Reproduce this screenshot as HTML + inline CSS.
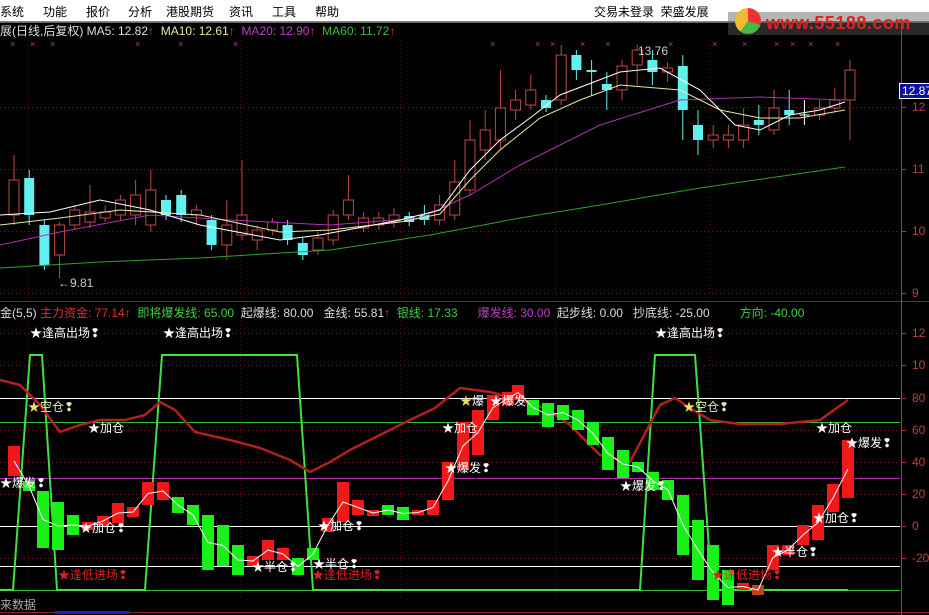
<!DOCTYPE html>
<html><head><meta charset="utf-8"><style>
body{margin:0;width:929px;height:615px;overflow:hidden;background:#000;font-family:"Liberation Sans","Noto Sans CJK SC",sans-serif;}
#menu{position:absolute;left:0;top:0;width:929px;height:21px;background:#fff;font-size:12px;color:#000;border-bottom:1px solid #888}
#menu span{position:absolute;top:3px}
.t{position:absolute;font-size:12px;white-space:nowrap;line-height:14px}
svg{position:absolute;left:0;top:0}
</style></head><body>
<div id="menu">
<span style="left:0">系统</span><span style="left:43px">功能</span><span style="left:86px">报价</span><span style="left:128px">分析</span><span style="left:166px">港股期货</span><span style="left:229px">资讯</span><span style="left:272px">工具</span><span style="left:315px">帮助</span>
<span style="left:594px">交易未登录 &nbsp;荣盛发展</span>
</div>
<svg id="s" width="929" height="615" xmlns="http://www.w3.org/2000/svg"></svg>
<div class="t" style="left:728px;top:12px;width:201px;height:23px;background:rgba(90,90,90,0.45)"></div>
<div class="t" style="left:735px;top:8px;width:26px;height:26px;border-radius:50%;background:conic-gradient(#e33 0 30%,#4b4 30% 60%,#eb3 60% 100%)"></div>
<div class="t" style="left:766px;top:12px;font-size:18px;font-weight:bold;color:#e02020;line-height:22px;letter-spacing:0.5px">www.55188.com</div>
<div class="t" style="left:0;top:24px;color:#ddd">展(日线,后复权) MA5: 12.82<span style="color:#f33">↑</span> &nbsp;<span style="color:#e8e8a0">MA10: 12.61</span><span style="color:#f33">↑</span> &nbsp;<span style="color:#c040c0">MA20: 12.90</span><span style="color:#f33">↑</span> &nbsp;<span style="color:#40c040">MA60: 11.72</span><span style="color:#f33">↑</span></div>
<div class="t" style="left:0;top:306px;color:#ddd">金(5,5) <span style="color:#e03030">主力资金: 77.14</span><span style="color:#f33">↑</span> &nbsp;<span style="color:#40d040">即将爆发线: 65.00</span> &nbsp;起爆线: 80.00 &nbsp; 金线: 55.81<span style="color:#f33">↑</span> &nbsp;<span style="color:#40d040">银线: 17.33</span> &nbsp; &nbsp; &nbsp;<span style="color:#c040c0">爆发线: 30.00</span> &nbsp;起步线: 0.00 &nbsp; 抄底线: -25.00 &nbsp; &nbsp; &nbsp; &nbsp; <span style="color:#40d040">方向: -40.00</span></div>
<div class="t" style="left:0;top:598px;color:#aaa">来数据</div>
<div class="t" style="left:899px;top:83px;background:#1010a0;color:#fff;padding:0 2px;border:1px solid #fff;">12.87</div>
<div class="t" style="left:912px;top:100px;color:#c04040">12</div>
<div class="t" style="left:912px;top:162px;color:#c04040">11</div>
<div class="t" style="left:912px;top:224px;color:#c04040">10</div>
<div class="t" style="left:912px;top:286px;color:#c04040">9</div>
<div class="t" style="left:912px;top:326px;color:#c04040">12</div>
<div class="t" style="left:912px;top:358px;color:#c04040">10</div>
<div class="t" style="left:912px;top:391px;color:#c04040">80</div>
<div class="t" style="left:912px;top:423px;color:#c04040">60</div>
<div class="t" style="left:912px;top:455px;color:#c04040">40</div>
<div class="t" style="left:912px;top:487px;color:#c04040">20</div>
<div class="t" style="left:912px;top:519px;color:#c04040">0</div>
<div class="t" style="left:912px;top:551px;color:#c04040">-20</div>
<div class="t" style="left:58px;top:276px;color:#ccc">←9.81</div>
<div class="t" style="left:638px;top:44px;color:#ccc">13.76</div>
<div class="t" style="left:30px;top:326px;color:#fff">★逢高出场❢</div>
<div class="t" style="left:163px;top:326px;color:#fff">★逢高出场❢</div>
<div class="t" style="left:655px;top:326px;color:#fff">★逢高出场❢</div>
<div class="t" style="left:28px;top:400px;color:#f0e060">★<span style="color:#e8e8b0">空仓❢</span></div>
<div class="t" style="left:683px;top:400px;color:#f0e060">★<span style="color:#e8e8b0">空仓❢</span></div>
<div class="t" style="left:88px;top:421px;color:#fff">★加仓</div>
<div class="t" style="left:442px;top:421px;color:#fff">★加仓</div>
<div class="t" style="left:816px;top:421px;color:#fff">★加仓</div>
<div class="t" style="left:460px;top:394px;color:#fff"><span style="color:#f0e060">★</span>爆</div>
<div class="t" style="left:490px;top:394px;color:#fff">★爆发</div>
<div class="t" style="left:0;top:476px;color:#fff">★爆发❢</div>
<div class="t" style="left:445px;top:461px;color:#fff">★爆发❢</div>
<div class="t" style="left:620px;top:479px;color:#fff">★爆发❢</div>
<div class="t" style="left:846px;top:436px;color:#fff">★爆发❢</div>
<div class="t" style="left:80px;top:521px;color:#fff">★加仓❢</div>
<div class="t" style="left:318px;top:519px;color:#fff">★加仓❢</div>
<div class="t" style="left:813px;top:511px;color:#fff">★加仓❢</div>
<div class="t" style="left:252px;top:560px;color:#fff">★半仓❢</div>
<div class="t" style="left:313px;top:557px;color:#fff">★半仓❢</div>
<div class="t" style="left:772px;top:545px;color:#fff">★半仓❢</div>
<div class="t" style="left:58px;top:568px;color:#e02020">★逢低进场❢</div>
<div class="t" style="left:312px;top:568px;color:#e02020">★逢低进场❢</div>
<div class="t" style="left:712px;top:568px;color:#e02020">★逢低进场❢</div>
<script>
var s=document.getElementById('s'),h='';
function L(x1,y1,x2,y2,c,w,d){h+='<line x1="'+x1+'" y1="'+y1+'" x2="'+x2+'" y2="'+y2+'" stroke="'+c+'" stroke-width="'+(w||1)+'"'+(d?' stroke-dasharray="'+d+'"':'')+'/>';}
function P(pts,c,w){h+='<polyline fill="none" stroke="'+c+'" stroke-width="'+(w||1)+'" points="'+pts+'"/>';}
function R(x,y,w,hh,f,st){h+='<rect x="'+x+'" y="'+y+'" width="'+w+'" height="'+Math.max(hh,1)+'" fill="'+f+'"'+(st?' stroke="'+st+'"':'')+'/>';}
L(0,22.5,929,22.5,'#666');
[107,169,231,293].forEach(function(y){L(0,y+.5,900,y+.5,'#701818',1,'1 3');});
[333,365,430,462,494,558].forEach(function(y){L(0,y+.5,900,y+.5,'#701818',1,'1 3');});
[28,240,400,555,710].forEach(function(x){L(x+.5,40,x+.5,300,'#501010',1,'1 3');L(x+.5,320,x+.5,598,'#501010',1,'1 3');});
L(901.5,22,901.5,615,'#c03030');L(0,301.5,929,301.5,'#902020');L(0,612.5,929,612.5,'#902020');
R(55,611,75,3,'#2020c0');
[107,169,231,293,333,365,398,430,462,494,526,558].forEach(function(y){L(901,y+.5,906,y+.5,'#c03030');});
[10,30,50,135,178,233,490,535,550,580,605,668,712,742,774,790,808,835].forEach(function(x){h+='<text x="'+x+'" y="47" fill="#c030c0" font-size="9" font-family="Liberation Sans">×</text>';});
var C=[[215,180,155,225,1],[178,215,170,225,0],[225,265,220,270,0],[255,225,222,278,1],[225,210,205,230,1],[222,212,185,228,1],[218,212,205,222,1],[215,200,195,220,1],[215,195,180,225,1],[225,190,170,232,1],[200,215,195,220,0],[195,215,190,222,0],[215,210,205,225,1],[220,245,215,250,0],[245,225,200,260,1],[235,215,160,240,1],[240,230,225,250,1],[230,222,218,235,1],[225,240,220,245,0],[243,255,238,260,0],[250,238,232,255,1],[240,215,210,245,1],[215,200,175,220,1],[228,218,212,232,1],[225,218,212,230,1],[222,215,208,228,1],[216,222,212,226,0],[215,220,205,225,0],[220,205,195,225,1],[215,182,160,220,1],[190,140,120,195,1],[150,130,110,160,1],[140,108,70,150,1],[110,100,90,120,1],[105,90,75,110,1],[100,108,95,112,0],[100,55,45,105,1],[55,70,50,80,0],[70,72,60,95,0],[84,90,72,110,0],[90,66,60,100,1],[65,50,45,85,1],[60,72,50,85,0],[72,68,62,82,1],[66,110,55,140,0],[125,140,110,155,0],[140,135,125,148,1],[140,135,125,148,1],[140,125,108,148,1],[120,125,105,135,0],[130,108,90,135,1],[110,115,90,125,0],[115,115,100,125,2],[115,108,100,120,1],[108,100,88,112,1],[100,70,60,140,1]];
C.forEach(function(c,k){var x=14+15.2*k,o=c[0],cl=c[1],t=Math.min(o,cl),b=Math.max(o,cl);
 if(c[4]==1){L(x,c[2],x,t,'#c04848');L(x,b,x,c[3],'#c04848');h+='<rect x="'+(x-5)+'" y="'+t+'" width="10" height="'+Math.max(b-t,1)+'" fill="none" stroke="#c04848"/>';}
 else if(c[4]==0){L(x,c[2],x,c[3],'#60f0f0');R(x-5,t,10,b-t,'#60f0f0');}
 else{L(x,c[2],x,c[3],'#fff');L(x-5,t,x+5,t,'#fff');}
});
P('0,268 100,262 200,258 330,250 430,235 520,218 600,205 700,188 790,175 845,167','#30a030');
P('0,245 60,232 150,215 230,220 330,225 420,218 470,195 520,165 600,125 680,100 760,97 845,100','#b030b0');
P('0,225 60,218 120,210 200,215 280,232 330,230 400,222 440,214 470,180 500,150 540,118 580,100 620,85 680,90 720,110 760,118 800,118 845,110','#e8e8a0');
P('0,215 50,212 100,200 150,210 200,225 280,240 320,235 400,220 440,210 470,170 500,140 530,118 560,95 620,72 660,68 700,90 735,125 760,130 790,115 820,110 845,102','#fff');
L(0,398.5,900,398.5,'#fff');L(0,422.5,900,422.5,'#30c030');L(0,478.5,900,478.5,'#b030b0');L(0,526.5,900,526.5,'#fff');L(0,566.5,900,566.5,'#fff');L(0,590.5,900,590.5,'#30c030');
P('0,590 13,590 30,355 42,355 57,590 145,590 162,355 297,355 313,590 640,590 655,355 695,355 712,590 848,590','#40e040',2);
P('0,380 20,385 40,405 60,432 80,425 100,420 125,420 145,415 160,402 175,410 195,432 230,440 260,448 290,460 310,472 330,462 350,450 380,435 410,420 435,408 460,388 490,392 520,400 545,408 570,425 600,455 630,462 660,405 675,398 690,408 710,420 740,424 780,424 820,420 848,400','#b02020',2.5);
var B=[[14,446,476,1],[29,481,491,0],[43,491,548,0],[58,502,550,0],[73,515,535,0],[88,522,530,1],[103,516,526,1],[118,503,523,1],[133,507,517,1],[148,482,505,1],[163,482,500,1],[178,497,513,0],[193,505,525,0],[208,515,570,0],[223,525,566,0],[238,545,575,0],[253,556,566,1],[268,540,560,1],[283,548,560,1],[298,558,575,0],[313,548,560,0],[328,518,532,1],[343,482,522,1],[358,500,515,1],[373,510,516,1],[388,505,515,0],[403,507,520,0],[418,510,515,1],[433,500,515,1],[448,462,500,1],[463,422,470,1],[478,410,455,1],[493,395,420,1],[508,392,405,1],[518,385,400,1],[533,400,415,0],[548,403,427,0],[563,405,420,0],[578,410,430,0],[593,422,445,0],[608,437,470,0],[623,450,478,0],[638,462,472,0],[653,472,490,0],[668,480,500,0],[683,495,555,0],[698,520,580,0],[713,545,600,0],[728,570,605,0],[743,583,590,1],[758,585,595,2],[773,545,570,1],[788,545,555,1],[803,525,545,1],[818,505,540,1],[833,484,512,1],[848,440,498,1]];
var pts=[];
B.forEach(function(b){var f=b[3]==1?'#f01818':b[3]==0?'#18f018':'#c04020';R(b[0]-6,b[1],12,b[2]-b[1],f);pts.push(b[0]+','+((b[1]+b[2])/2));});
P(pts.join(' '),'#fff');
s.innerHTML=h;
</script>
</body></html>
